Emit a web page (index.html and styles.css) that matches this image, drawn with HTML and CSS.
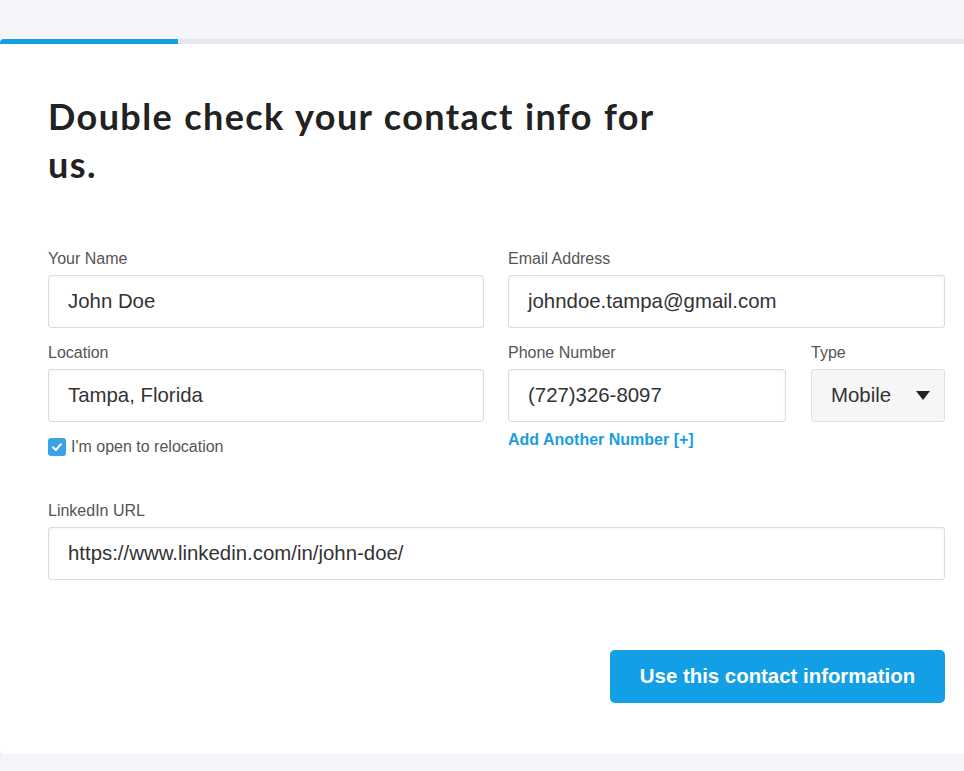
FILE: index.html
```html
<!DOCTYPE html>
<html lang="en">
<head>
    <meta charset="UTF-8">
    <meta name="viewport" content="width=device-width, initial-scale=1.0">
    <title>Contact Info</title>
    <link rel="stylesheet" href="styles.css">
</head>
<body>

    <div class="card">
        <!-- Progress -->
        <div class="progress"><div class="progress-fill"></div></div>

        <div class="card-body">
            <h1>Double check your contact info for us.</h1>

            <div class="form-grid">
                <div class="field">
                    <label>Your Name</label>
                    <div class="input">John Doe</div>
                </div>
                <div class="field">
                    <label>Email Address</label>
                    <div class="input">johndoe.tampa@gmail.com</div>
                </div>

                <div class="field">
                    <label>Location</label>
                    <div class="input">Tampa, Florida</div>
                    <div class="check-row">
                        <span class="checkbox">
                            <svg width="12" height="12" viewBox="0 0 12 12"><path d="M2 6.3 L4.8 9 L10 3.2" fill="none" stroke="#fff" stroke-width="2" stroke-linecap="round" stroke-linejoin="round"/></svg>
                        </span>
                        I'm open to relocation
                    </div>
                </div>
                <div class="phone-group">
                    <div class="field">
                        <label>Phone Number</label>
                        <div class="input">(727)326-8097</div>
                        <a class="add-link" href="#">Add Another Number [+]</a>
                    </div>
                    <div class="field type-field">
                        <label>Type</label>
                        <div class="select">
                            Mobile
                            <svg width="14" height="9" viewBox="0 0 14 9"><path d="M0 0 H14 L7 9 Z" fill="#222"/></svg>
                        </div>
                    </div>
                </div>

                <div class="field full">
                    <label>LinkedIn URL</label>
                    <div class="input">https://www.linkedin.com/in/john-doe/</div>
                </div>
            </div>

            <div class="actions">
                <button class="primary">Use this contact information</button>
            </div>
        </div>
    </div>

</body>
</html>
```

FILE: styles.css
```css
* {
    margin: 0;
    padding: 0;
    box-sizing: border-box;
}

body {
    font-family: "Liberation Sans", Arial, sans-serif;
    background-color: #f4f5f8;
    color: #333;
    overflow: hidden;
    padding-top: 39px;
}

.card {
    width: 1000px;
    background-color: #fff;
    border-radius: 4px 0 0 4px;
    box-shadow: 0 3px 4px rgba(0, 0, 0, 0.05);
    overflow: hidden;
}

.progress {
    height: 5px;
    background-color: #e6e7ec;
}

.progress-fill {
    width: 178px;
    height: 100%;
    background-color: #169de2;
}

.card-body {
    padding: 48px 55px 51px 48px;
    width: 1000px;
}

h1 {
    font-family: "Lato", "Noto Sans", sans-serif;
    font-size: 36px;
    font-weight: 700;
    line-height: 48px;
    color: #222;
    width: 630px;
    letter-spacing: 1.4px;
    word-spacing: 1px;
    margin-bottom: 62px;
}

.form-grid {
    width: 897px;
    display: grid;
    grid-template-columns: 436px 437px;
    column-gap: 24px;
    row-gap: 16px;
}

.field {
    display: flex;
    flex-direction: column;
}

.field.full {
    grid-column: 1 / 3;
    margin-top: 30px;
}

label {
    font-size: 16px;
    color: #555;
    line-height: 17px;
    margin-bottom: 8px;
}

.input {
    height: 53px;
    border: 1px solid #dcdcdc;
    border-radius: 3px;
    box-shadow: inset 0 1px 3px rgba(0, 0, 0, 0.05);
    padding: 0 19px;
    font-size: 20.4px;
    color: #333;
    display: flex;
    align-items: center;
}

.check-row {
    display: flex;
    align-items: center;
    gap: 5px;
    margin-top: 16px;
    font-size: 16px;
    line-height: 18px;
    color: #555;
}

.checkbox {
    width: 18px;
    height: 18px;
    border-radius: 3px;
    background-color: #3aa3e3;
    display: flex;
    align-items: center;
    justify-content: center;
}

.phone-group {
    display: grid;
    grid-template-columns: 278px 134px;
    column-gap: 25px;
}

.add-link {
    color: #1a9ee0;
    font-weight: 700;
    font-size: 16px;
    line-height: 18px;
    text-decoration: none;
    margin-top: 9px;
}

.select {
    height: 53px;
    border: 1px solid #e0e0e0;
    border-radius: 3px;
    background-color: #f6f6f6;
    padding: 0 14px 0 19px;
    font-size: 20.4px;
    color: #333;
    display: flex;
    align-items: center;
    justify-content: space-between;
}

.actions {
    width: 897px;
    display: flex;
    justify-content: flex-end;
    margin-top: 70px;
}

button.primary {
    width: 335px;
    height: 53px;
    background-color: #129fe5;
    color: #fff;
    border: none;
    border-radius: 5px;
    font-family: "Liberation Sans", Arial, sans-serif;
    font-size: 20.4px;
    font-weight: 700;
    cursor: pointer;
}
```
